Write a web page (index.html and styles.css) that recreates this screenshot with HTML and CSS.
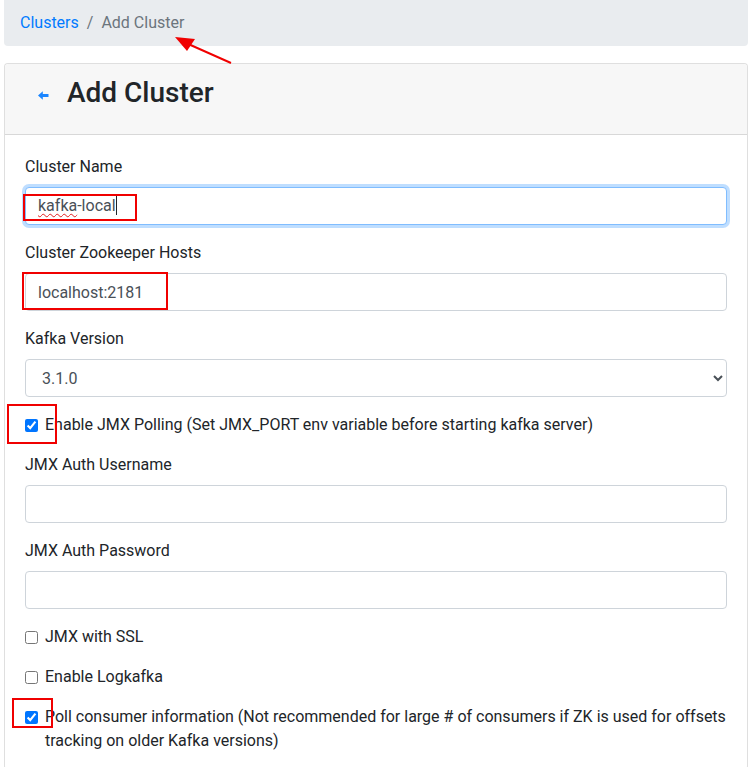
FILE: index.html
```html
<!DOCTYPE html>
<html lang="en">
<head>
<meta charset="utf-8">
<title>Add Cluster</title>
<link rel="stylesheet" href="styles.css">
</head>
<body>
<div class="page">
  <nav class="breadcrumb">
    <a class="crumb-link" href="#">Clusters</a>
    <span class="crumb-sep">/</span>
    <span class="crumb-active">Add Cluster</span>
  </nav>

  <div class="card">
    <div class="card-header">
      <a class="back" href="#" aria-label="Back">
        <svg width="11" height="9" viewBox="0 0 11 9"><path d="M0 4.5 L4.8 0.3 L4.8 3.1 L10.5 3.1 L10.5 5.9 L4.8 5.9 L4.8 8.7 Z" fill="#1a85ff"/></svg>
      </a>
      <h3 class="title">Add Cluster</h3>
    </div>
    <div class="card-body">
      <div class="form-group">
        <label class="label">Cluster Name</label>
        <div class="form-control focused"><span class="misspelled">kafka</span>-local<span class="caret"></span></div>
      </div>
      <div class="form-group">
        <label class="label">Cluster Zookeeper Hosts</label>
        <input class="form-control" type="text" value="localhost:2181">
      </div>
      <div class="form-group">
        <label class="label">Kafka Version</label>
        <select class="form-control">
          <option>3.1.0</option>
        </select>
      </div>
      <div class="form-check">
        <input type="checkbox" class="check" checked>
        <label class="check-label">Enable JMX Polling (Set JMX_PORT env variable before starting kafka server)</label>
      </div>
      <div class="form-group">
        <label class="label">JMX Auth Username</label>
        <input class="form-control" type="text" value="">
      </div>
      <div class="form-group">
        <label class="label">JMX Auth Password</label>
        <input class="form-control" type="password" value="">
      </div>
      <div class="form-check">
        <input type="checkbox" class="check">
        <label class="check-label">JMX with SSL</label>
      </div>
      <div class="form-check">
        <input type="checkbox" class="check">
        <label class="check-label">Enable Logkafka</label>
      </div>
      <div class="form-check">
        <input type="checkbox" class="check" checked>
        <label class="check-label">Poll consumer information (Not recommended for large # of consumers if ZK is used for offsets tracking on older Kafka versions)</label>
      </div>
    </div>
  </div>

  <div class="mark mark-1"></div>
  <div class="mark mark-2"></div>
  <div class="mark mark-3"></div>
  <div class="mark mark-4"></div>
  <svg class="arrow" width="80" height="50" viewBox="170 30 80 50">
    <line x1="231" y1="63" x2="186" y2="43" stroke="#f00000" stroke-width="2"/>
    <polygon points="175,37 195,39 187,51" fill="#f00000"/>
  </svg>
</div>
</body>
</html>
```

FILE: styles.css
```css
* { box-sizing: border-box; }

html, body {
  margin: 0;
  padding: 0;
  background: #ffffff;
}

body {
  font-family: Roboto, "Liberation Sans", Arial, sans-serif;
  font-size: 16px;
  line-height: 1.5;
  color: #212529;
  overflow: hidden;
}

.page {
  position: relative;
  padding-left: 4px;
  width: 748px;
}

.breadcrumb {
  display: flex;
  align-items: center;
  background: #e9ecef;
  border-radius: 0 0 4px 4px;
  padding: 11px 16px 11px 16px;
  margin-bottom: 17px;
}

.crumb-link {
  color: #007bff;
  text-decoration: none;
}

.crumb-sep {
  color: #6c757d;
  padding: 0 8px;
}

.crumb-active {
  color: #6c757d;
}

.card {
  border: 1px solid rgba(0, 0, 0, 0.125);
  border-radius: 4px;
  background: #fff;
}

.card-header {
  display: flex;
  align-items: center;
  background: #f7f7f7;
  border-bottom: 1px solid rgba(0, 0, 0, 0.125);
  padding: 12px 20px 24px 33px;
  border-radius: 4px 4px 0 0;
}

.back {
  display: flex;
  align-items: center;
  width: 29px;
  height: 34px;
  padding-top: 5px;
}

.title {
  margin: 0;
  font-size: 28px;
  font-weight: 500;
  line-height: 34px;
  color: #212529;
}

.card-body {
  padding: 20px 20px 0 20px;
}

.form-group {
  margin-bottom: 16px;
}

.label {
  display: block;
  margin-bottom: 8px;
}

.form-control {
  display: block;
  width: 100%;
  height: 38px;
  padding: 6px 12px;
  font-family: inherit;
  font-size: 16px;
  line-height: 24px;
  color: #495057;
  background: #fff;
  border: 1px solid #ced4da;
  border-radius: 4px;
}

.focused {
  border-color: #80bdff;
  box-shadow: 0 0 0 3px rgba(0, 123, 255, 0.25);
}

.misspelled {
  text-decoration: underline wavy #e02020;
  text-decoration-thickness: 1px;
  text-underline-offset: 2px;
}

.caret {
  display: inline-block;
  width: 1px;
  height: 19px;
  background: #212529;
  vertical-align: -4px;
}

.form-check {
  display: flex;
  align-items: flex-start;
  margin-bottom: 16px;
}

.check {
  width: 13px;
  height: 13px;
  margin: 6px 7px 0 0;
  flex: none;
}

.check-label {
  line-height: 24px;
}

.mark {
  position: absolute;
  border: 2px solid #f00000;
}

.mark-1 { left: 23px; top: 194px; width: 114px; height: 27px; }
.mark-2 { left: 22px; top: 272px; width: 146px; height: 38px; }
.mark-3 { left: 7px; top: 404px; width: 50px; height: 40px; }
.mark-4 { left: 12px; top: 698px; width: 41px; height: 30px; }

.arrow {
  position: absolute;
  left: 170px;
  top: 30px;
}
```
